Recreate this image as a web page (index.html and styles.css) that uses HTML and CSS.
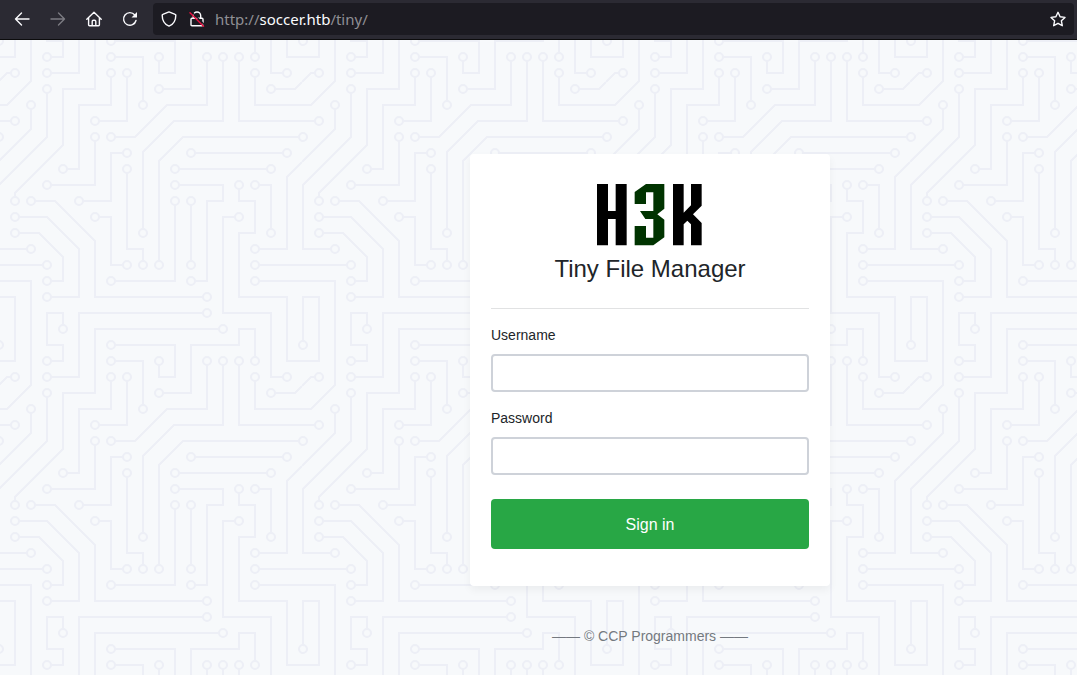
FILE: index.html
```html
<!DOCTYPE html>
<html lang="en">
<head>
<meta charset="utf-8">
<title>Tiny File Manager</title>
<link rel="stylesheet" href="styles.css">
</head>
<body>
<header class="toolbar">
  <nav class="nav-buttons" aria-label="Browser navigation">
    <button class="nav-button" type="button" aria-label="Back">
      <svg class="icon" viewBox="0 0 16 16"><path d="M15 8H1.5M7.5 2 1.5 8l6 6"/></svg>
    </button>
    <button class="nav-button nav-button-off" type="button" aria-label="Forward" disabled>
      <svg class="icon" viewBox="0 0 16 16"><path d="M1 8h13.500M8.500 2l6 6-6 6"/></svg>
    </button>
    <button class="nav-button" type="button" aria-label="Home">
      <svg class="icon" viewBox="0 0 16 16"><path d="M.8 8.200 8 1.300l7.200 6.900M2.600 7v6.800q0 .9.900.9h9q.9 0 .9-.9V7M6.200 14.500v-4q0-1.200 1.200-1.200h1.200q1.200 0 1.200 1.200v4"/></svg>
    </button>
    <button class="nav-button" type="button" aria-label="Reload">
      <svg class="icon" viewBox="0 0 16 16"><path d="M14 9.500A6.300 6.300 0 1 1 12.800 4"/><path class="icon-solid" d="M15 1v5.500H9.500z"/></svg>
    </button>
  </nav>
  <div class="address-bar">
    <svg class="icon" viewBox="0 0 16 16"><path d="M8 .9 14.200 3.300q.6.200.6.900C14.800 9.500 12.500 13.300 8 15.100 3.500 13.300 1.200 9.500 1.200 4.200q0-.7.6-.9z"/></svg>
    <svg class="icon icon-lock" viewBox="0 0 16 16"><path d="M4.300 7V4.700a3.700 3.700 0 0 1 7.400 0V7M3 7.300h10q1 0 1 1v5.400q0 1-1 1H3q-1 0-1-1V8.300q0-1 1-1z"/><path class="icon-gap" d="M2.500.8 16 14.300"/><path class="icon-slash" d="M1 1.800 14.500 15.300"/></svg>
    <span class="address">http://<span class="host">soccer.htb</span>/tiny/</span>
    <button class="bookmark" type="button" aria-label="Bookmark this page">
      <svg class="icon" viewBox="0 0 16 16"><path d="m8 1.300 2.100 4.500 4.900.6-3.600 3.400.9 4.900L8 12.300l-4.300 2.400.9-4.900L1 6.400l4.900-.6z"/></svg>
    </button>
  </div>
</header>
<main class="page">
  <form class="card">
    <svg class="logo" viewBox="15 12 318 186" role="img" aria-label="H3K">
      <path d="M15 12h33v81h23V12h33v184H71v-79H48v79H15z"/>
      <path class="logo-accent" d="M162 12h55v74l-21 17 21 16v53l-33 24h-56v-58h34v35h22v-56h-24l-16-24h40V37h-22v35h-34V36z"/>
      <path d="M243 12h32v86l22-22V12h32v65l-26 26 26 26v67h-32v-63l-11-11-11 11v63h-32z"/>
    </svg>
    <h1 class="title">Tiny File Manager</h1>
    <hr class="divider">
    <div class="field">
      <label for="username">Username</label>
      <input id="username" name="username" type="text">
    </div>
    <div class="field">
      <label for="password">Password</label>
      <input id="password" name="password" type="password">
    </div>
    <button class="submit" type="submit">Sign in</button>
  </form>
  <footer class="footer">—— © CCP Programmers ——</footer>
</main>
</body>
</html>
```

FILE: styles.css
```css
* {
  box-sizing: border-box;
}

body {
  margin: 0;
  min-height: 100vh;
  display: flex;
  flex-direction: column;
  color: #212529;
  font: 14px/21px "Liberation Sans", Arial, sans-serif;
}

button {
  border: 0;
  font: inherit;
}

/* Browser toolbar */

.toolbar {
  display: flex;
  gap: 5px;
  height: 40px;
  padding: 3px 3px 4px 4px;
  background: #2b2a33;
  border-bottom: 1px solid #0c0c0d;
  color: #fbfbfe;
}

.nav-buttons {
  display: flex;
}

.nav-button {
  display: grid;
  place-items: center;
  width: 36px;
  padding: 0;
  background: none;
  color: inherit;
}

.nav-button-off {
  color: #7c7b82;
}

.icon {
  display: block;
  flex: none;
  width: 16px;
  height: 16px;
  fill: none;
  stroke: currentColor;
  stroke-width: 1.4;
  stroke-linecap: round;
  stroke-linejoin: round;
}

.icon-solid {
  fill: currentColor;
  stroke: none;
}

.icon-gap {
  stroke: #1c1b22;
}

.icon-slash {
  stroke: #e8103f;
}

.address-bar {
  flex: 1;
  display: flex;
  align-items: center;
  padding: 0 8px;
  border-radius: 4px;
  background: #1c1b22;
}

.icon-lock {
  margin: 0 10px 0 12px;
}

.address {
  flex: 1;
  color: #8f8f94;
  font: 15px/20px "Noto Sans", sans-serif;
}

.host {
  color: #fbfbfe;
}

.bookmark {
  padding: 0;
  background: none;
  color: inherit;
}

/* Login page */

.page {
  flex: 1;
  display: flex;
  flex-direction: column;
  align-items: center;
  padding: 114px 0 28px 223px;
  background: #f7f9fb url("data:image/svg+xml,%3Csvg xmlns='http://www.w3.org/2000/svg' xmlns:xlink='http://www.w3.org/1999/xlink' width='304' height='304' fill='none'%3E%3Cpath stroke='%23edeff6' stroke-width='2' d='M0 225H49M209 273H81V304M257 225H304M257 241H304M33 304V241H0M273 129H177M17 81H0M193 113H289M257 17V0M193 225V161M241 17V81H304M257 33V65H304M129 129V209H145V225M129 113H113V161H81M113 241H177V161M97 177H113V225H129M65 289V273H49V304M241 177H225V273H273V304M257 145H273V193M193 241H209V161H225V145H177M289 33H273V0M97 97V145H49M49 33H81V0M113 33V65H81V129H65M97 81H129V33M113 17H145V65M225 289H97V304M241 145V161H257V193H241V257H289V304M49 17H65V1H49V0M161 49H193V1H242M257 304V289H241V304M113 1H177V33H161V17M113 97H137L169 65H209V17M145 193V112L176 81H225V17M161 225V121L185 97H304M17 161V153L65 105V49H97V0M49 49V97L1 145V209H33M33 65V89L0 122M17 33H9L0 42M273 49H297L304 42M257 209H289V137L304 122M49 241H65V217L41 193H17M209 257H97V201L57 161H33M49 257H81V209L49 177H17M33 0V41L9 65H0M1 304V257H17V304M17 0V17H0M304 17H289V0'/%3E%3Cg stroke-linecap='round'%3E%3Cpath id='d' stroke='%23edeff6' stroke-width='10' d='M49 225h0M209 273h0M257 225h0M257 241h0M273 129h0M177 129h0M17 81h0M193 113h0M289 113h0M257 17h0M193 225h0M193 161h0M241 17h0M257 33h0M145 225h0M129 129h0M129 113h0M81 161h0M113 241h0M177 161h0M97 177h0M129 225h0M65 289h0M241 177h0M257 145h0M273 193h0M193 241h0M177 145h0M289 33h0M49 145h0M97 97h0M49 33h0M65 129h0M113 33h0M97 81h0M129 33h0M113 17h0M145 65h0M225 289h0M241 145h0M49 17h0M161 49h0M113 1h0M113 305h0M161 17h0M113 97h0M209 17h0M145 193h0M225 17h0M161 225h0M1 97h0M305 97h0M17 161h0M33 209h0M49 49h0M33 65h0M17 33h0M273 49h0M257 209h0M49 241h0M17 193h0M209 257h0M33 161h0M49 257h0M17 177h0M1 1h0M305 1h0M1 305h0M305 305h0'/%3E%3Cpath stroke='%23f7f9fb' stroke-width='6' d='M49 225h0M209 273h0M257 225h0M257 241h0M273 129h0M177 129h0M17 81h0M193 113h0M289 113h0M257 17h0M193 225h0M193 161h0M241 17h0M257 33h0M145 225h0M129 129h0M129 113h0M81 161h0M113 241h0M177 161h0M97 177h0M129 225h0M65 289h0M241 177h0M257 145h0M273 193h0M193 241h0M177 145h0M289 33h0M49 145h0M97 97h0M49 33h0M65 129h0M113 33h0M97 81h0M129 33h0M113 17h0M145 65h0M225 289h0M241 145h0M49 17h0M161 49h0M113 1h0M113 305h0M161 17h0M113 97h0M209 17h0M145 193h0M225 17h0M161 225h0M1 97h0M305 97h0M17 161h0M33 209h0M49 49h0M33 65h0M17 33h0M273 49h0M257 209h0M49 241h0M17 193h0M209 257h0M33 161h0M49 257h0M17 177h0M1 1h0M305 1h0M1 305h0M305 305h0'/%3E%3C/g%3E%3C/svg%3E") -2px 0;
}

.card {
  display: flex;
  flex-direction: column;
  width: 100%;
  max-width: 360px;
  padding: 30px 21px 37px;
  border-radius: 4px;
  background: #fff;
  box-shadow: 0 4px 8px rgba(0, 0, 0, 0.05);
}

.logo {
  align-self: center;
  width: 106px;
  height: 62px;
}

.logo-accent {
  fill: #003300;
}

.title {
  margin: 8px 0 25px;
  font-size: 24px;
  font-weight: 400;
  line-height: 29px;
  text-align: center;
}

.divider {
  width: 100%;
  margin: 0 0 16px;
  border: 0;
  border-top: 1px solid #e1e2e3;
}

.field {
  display: flex;
  flex-direction: column;
  gap: 8px;
  margin-bottom: 16px;
}

.field input {
  width: 100%;
  height: 38px;
  padding: 6px 12px;
  border: 2px solid #ced2d9;
  border-radius: 4px;
  background: #fff;
  color: inherit;
  font: inherit;
}

.submit {
  height: 50px;
  margin-top: 8px;
  border-radius: 4px;
  background: #28a745;
  color: #fff;
  font-size: 16px;
}

.footer {
  margin-top: 40px;
  color: #74797f;
  text-align: center;
}
```
